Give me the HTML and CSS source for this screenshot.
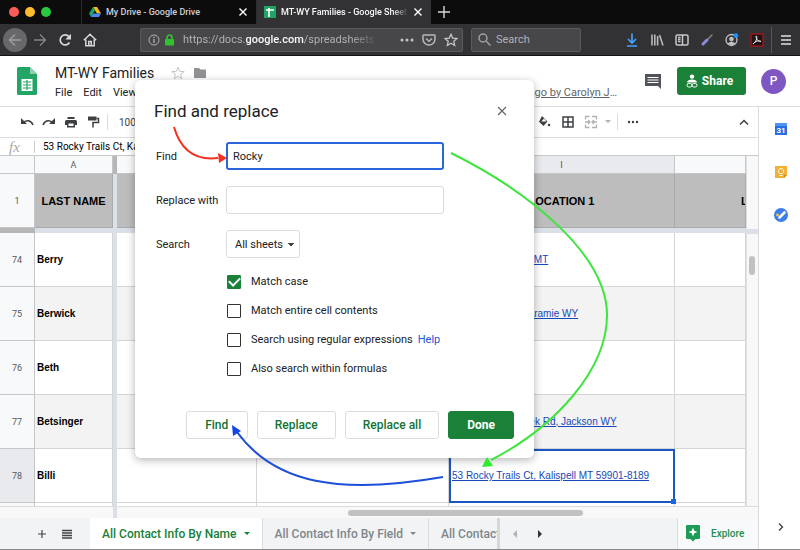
FILE: index.html
```html
<!DOCTYPE html>
<html lang="en">
<head>
    <meta charset="UTF-8">
    <meta name="viewport" content="width=device-width, initial-scale=1.0">
    <title>MT-WY Families - Google Sheets</title>
    <link rel="stylesheet" href="styles.css">
</head>
<body>
    <div class="tabs">
        <div class="lights"><span class="red"></span><span class="yellow"></span><span class="green"></span></div>
        <div class="tab">
            <svg width="12" height="12" viewBox="0 0 24 24"><path fill="#f9bc15" d="M8 2h8l8 13h-8z"/><path fill="#1ea362" d="M8 2l4 7-8 13-4-7z"/><path fill="#4688f4" d="M8 15h16l-4 7H4z"/></svg>
            <span class="tab-name">My Drive - Google Drive</span>
            <button class="plain" aria-label="Close tab"><svg width="10" height="10" viewBox="0 0 10 10"><path d="M1.500 1.500l7 7M8.500 1.500l-7 7" stroke="#fff" stroke-width="1.400"/></svg></button>
        </div>
        <div class="tab current">
            <svg width="12" height="12" viewBox="0 0 12 12"><rect width="12" height="12" fill="#1fa463"/><path d="M2 4h8M5 2v9" stroke="#fff" stroke-width="1.600"/></svg>
            <span class="tab-name fade">MT-WY Families - Google Sheets</span>
            <button class="plain" aria-label="Close tab"><svg width="10" height="10" viewBox="0 0 10 10"><path d="M1.500 1.500l7 7M8.500 1.500l-7 7" stroke="#fff" stroke-width="1.400"/></svg></button>
        </div>
        <button class="plain new-tab" aria-label="New tab"><svg width="12" height="12" viewBox="0 0 12 12"><path d="M6 0v12M0 6h12" stroke="#d8d8d8" stroke-width="1.400"/></svg></button>
    </div>

    <div class="navbar">
        <button class="plain back" aria-label="Back"><svg width="14" height="14" viewBox="0 0 14 14" fill="none" stroke="#a0a0a2" stroke-width="1.300"><path d="M13 7H1.500M7 1.500L1.500 7 7 12.500"/></svg></button>
        <button class="plain" aria-label="Forward"><svg width="14" height="14" viewBox="0 0 14 14" fill="none" stroke="#858587" stroke-width="1.300"><path d="M1 7h11.500M7 1.500L12.500 7 7 12.500"/></svg></button>
        <button class="plain" aria-label="Reload"><svg width="14" height="14" viewBox="0 0 14 14" fill="none" stroke="#d7d7db" stroke-width="1.700"><path d="M11.500 9.500A5 5 0 1 1 11 3.700"/><path fill="#d7d7db" stroke="none" d="M13 .8v5.700H7.300z"/></svg></button>
        <button class="plain" aria-label="Home"><svg width="14" height="14" viewBox="0 0 14 14" fill="none" stroke="#d7d7db" stroke-width="1.500"><path d="M.8 7.300L7 1.300l6.200 6M2.800 6.500v6.300h8.400V6.500M5.800 12.500V8.500h2.400v4"/></svg></button>
        <div class="urlbar">
            <svg width="12" height="12" viewBox="0 0 12 12" fill="none" stroke="#b1b1b3"><circle cx="6" cy="6" r="5"/><path d="M6 5v4M6 2.800v1.200" stroke-width="1.300"/></svg>
            <svg width="11" height="12" viewBox="0 0 11 12"><path d="M3 6V3.500a2.500 2.500 0 0 1 5 0V6" fill="none" stroke="#30c030" stroke-width="1.700"/><rect x="1" y="5" width="9" height="6.500" rx="1" fill="#30c030"/></svg>
            <span class="url">https://docs.<b>google.com</b>/spreadsheets</span>
            <svg width="14" height="14" viewBox="0 0 14 14" fill="#c4c4c6"><circle cx="2" cy="7" r="1.500"/><circle cx="7" cy="7" r="1.500"/><circle cx="12" cy="7" r="1.500"/></svg>
            <svg width="14" height="14" viewBox="0 0 14 14" fill="none" stroke="#b8b8ba" stroke-width="1.500"><path d="M1.800 2h10.400q.8 0 .8.800V6a6 6 0 0 1-12 0V2.800q0-.8.8-.8z"/><path d="M4 5.500l3 2.800 3-2.800"/></svg>
            <svg width="14" height="14" viewBox="0 0 14 14" fill="none" stroke="#c4c4c6" stroke-width="1.300"><path d="M7 1.200l1.700 3.900 4.300.4-3.200 2.800.9 4.200L7 10.300l-3.700 2.200.9-4.200L1 5.500l4.300-.4z"/></svg>
        </div>
        <label class="searchbox">
            <svg width="13" height="13" viewBox="0 0 13 13" fill="none" stroke="#a0a0a2" stroke-width="1.500"><circle cx="5" cy="5" r="4"/><path d="M8 8l4.500 4.500"/></svg>
            <input type="text" placeholder="Search" aria-label="Search">
        </label>
        <div class="tools">
            <svg width="16" height="16" viewBox="0 0 16 16" fill="none" stroke="#45a1ff" stroke-width="1.700"><path d="M8 1.500v9M4 7l4 4 4-4M3 14h10"/></svg>
            <svg width="16" height="16" viewBox="0 0 16 16" fill="none" stroke="#b8b8ba" stroke-width="1.600"><path d="M3 2.500v11M5.800 2.500v11M8.600 4v9.500M10.500 3l3.500 10.500"/></svg>
            <svg width="16" height="16" viewBox="0 0 16 16" fill="none" stroke="#c8c8ca" stroke-width="1.500"><rect x="2" y="3" width="12" height="10" rx="1.500"/><path d="M8.500 3v10M4 5.500h2.500M4 7.500h2.500M4 9.500h2.500"/></svg>
            <svg width="16" height="16" viewBox="0 0 16 16" stroke-linecap="round"><path d="M4 12l4-4" stroke="#8d8dd8" stroke-width="3"/><path d="M9 7l4-4" stroke="#888" stroke-width="1.200"/></svg>
            <svg width="16" height="16" viewBox="0 0 16 16"><circle cx="7.500" cy="8" r="5.500" fill="none" stroke="#c0c0c2" stroke-width="1.300"/><circle cx="7.500" cy="7" r="2.300" fill="#c0c0c2"/><path d="M3.800 11.500c2-2.500 5.400-2.500 7.400 0l-2 1.500H6z" fill="#c0c0c2"/><circle cx="12" cy="3.500" r="2.300" fill="#1e90ff"/></svg>
            <svg width="16" height="16" viewBox="0 0 16 16"><rect x="2" y="2" width="12" height="12" fill="#211516" stroke="#b3151b" stroke-width="1.200"/><path d="M4 12c3-2 4.500-6 3.500-8-1.500 0 .5 6 4.500 5.500-1.500-1.500-6-.5-8 2.500" fill="none" stroke="#e8e8e8"/></svg>
        </div>
        <button class="plain menu" aria-label="Menu"><svg width="12" height="12" viewBox="0 0 12 12"><path d="M1 2h10M1 6h10M1 10h10" stroke="#e0e0e2" stroke-width="1.500"/></svg></button>
    </div>

    <header class="header">
        <svg width="20" height="28" viewBox="0 0 20 28"><path d="M1.500 0H13l7 7v19.500a1.500 1.500 0 0 1-1.500 1.500h-17A1.500 1.500 0 0 1 0 26.500v-25A1.500 1.500 0 0 1 1.500 0z" fill="#23a566"/><path d="M13 0l7 7h-7z" fill="#8ed1b1"/><path d="M4.500 12h11v12h-11z" fill="#fff"/><path d="M6 15h8M6 18h8M6 21h8M10 13v10" stroke="#23a566" stroke-width="1.200"/></svg>
        <div class="doc">
            <div class="doc-title">
                <h1>MT-WY Families</h1>
                <svg width="14" height="14" viewBox="0 0 14 14" fill="none" stroke="#c4c4c4"><path d="M7 1.200l1.600 4.100 4.600.3-3.500 2.800 1.100 4.400L7 10.300l-3.800 2.500 1.100-4.400L.8 5.600l4.600-.3z"/></svg>
                <svg width="14" height="12" viewBox="0 0 14 12" fill="#8f9194"><path d="M1 1h5l1.500 1.500H12a1 1 0 0 1 1 1V11H1z"/></svg>
            </div>
            <nav class="menus"><a href="#">File</a><a href="#">Edit</a><a href="#">View</a></nav>
        </div>
        <a class="last-edit" href="#">Last edit was 2 days ago by Carolyn J</a>
        <svg width="16" height="16" viewBox="0 0 16 16"><path d="M0 1h16v15l-3-3H0z" fill="#50545a"/><path d="M2.500 4.500h11M2.500 7h11M2.500 9.500h11" stroke="#fff" stroke-width="1.200"/></svg>
        <button class="share">
            <svg width="12" height="14" viewBox="0 0 12 14"><circle cx="6" cy="2.600" r="2.200" fill="#fff"/><path d="M1 8.500c0-4 10-4 10 0z" fill="#fff"/><rect x="1" y="9.500" width="5" height="3.500" rx="1.700" fill="none" stroke="#fff"/><rect x="6" y="9.500" width="5" height="3.500" rx="1.700" fill="none" stroke="#fff"/></svg>
            Share
        </button>
        <button class="avatar">P</button>
    </header>

    <div class="work">
        <main class="main">
            <div class="toolbar">
                <div class="tool-group">
                    <svg width="16" height="16" viewBox="0 0 16 16"><path d="M2 4v6h6z" fill="#3c4043"/><path d="M4 9c3-3.500 8-3 10 2" fill="none" stroke="#3c4043" stroke-width="1.500"/></svg>
                    <svg width="16" height="16" viewBox="0 0 16 16"><path d="M14 4v6H8z" fill="#3c4043"/><path d="M12 9c-3-3.500-8-3-10 2" fill="none" stroke="#3c4043" stroke-width="1.500"/></svg>
                    <svg width="16" height="16" viewBox="0 0 16 16"><path d="M4.500 3h7v2h-7zM3.500 6h9A1.500 1.500 0 0 1 14 7.500V11h-2v2.500H4V11H2V7.500A1.500 1.500 0 0 1 3.500 6z" fill="#3c4043"/><path d="M5.500 9.500h5V12h-5z" fill="#fff"/></svg>
                    <svg width="16" height="16" viewBox="0 0 16 16"><path d="M3 2.500h8.500v4H3z" fill="#3c4043"/><path d="M11.500 4.500h2v4H8v5" fill="none" stroke="#3c4043" stroke-width="1.500"/></svg>
                </div>
                <div class="divider"></div>
                <span class="zoom">100%</span>
                <div class="tool-group right">
                    <svg width="16" height="16" viewBox="0 0 16 16"><path d="M5 2l5.500 5.500L6.500 12 2 7.800z" fill="#3c4043"/><path d="M4.300 7.500l2.700-3 2.500 3z" fill="#fff"/><circle cx="12" cy="11" r="1.300" fill="#3c4043"/></svg>
                    <svg width="16" height="16" viewBox="0 0 16 16" fill="none" stroke="#3c4043" stroke-width="1.500"><path d="M3 3h10v10H3zM8 3v10M3 8h10"/></svg>
                    <svg width="16" height="16" viewBox="0 0 16 16" fill="none" stroke="#b0b2b4" stroke-width="1.300"><path d="M2.500 5.500v-3h4M9 2.500h4.500v3M13.500 10.500v3H9M6.500 13.500h-4v-3M2 8h5M5 6l2 2-2 2M14 8H9M11 6L9 8l2 2"/></svg>
                    <svg class="caret" width="6" height="4" viewBox="0 0 6 4"><path d="M0 0h6L3 3z" fill="#b0b2b4"/></svg>
                    <div class="divider"></div>
                    <svg width="16" height="16" viewBox="0 0 16 16" fill="#3c4043"><circle cx="4" cy="8" r="1.200"/><circle cx="8" cy="8" r="1.200"/><circle cx="12" cy="8" r="1.200"/></svg>
                </div>
                <button class="plain collapse" aria-label="Hide menus"><svg width="10" height="8" viewBox="0 0 10 8"><path d="M1 6.500l4-4 4 4" fill="none" stroke="#3c4043" stroke-width="1.500"/></svg></button>
            </div>

            <div class="formula">
                <span class="fx">fx</span>
                <span class="formula-text">53 Rocky Trails Ct, Kalispell MT 59901-8189</span>
            </div>

            <div class="sheet">
                <div class="grid">
                    <table>
                        <colgroup><col class="c-num"><col class="c-a"><col class="c-freeze"><col class="c-b"><col class="c-h"><col class="c-i"><col></colgroup>
                        <thead>
                            <tr class="letters"><th></th><th>A</th><th class="bar"></th><th></th><th></th><th class="picked">I</th><th></th></tr>
                        </thead>
                        <tbody>
                            <tr class="titles"><th class="num">1</th><th>LAST NAME</th><th class="freeze"></th><th></th><th></th><th>LOCATION 1</th><th class="cut">LOCATION 2</th></tr>
                            <tr class="freeze-row"><th class="bar"></th><td colspan="6"></td></tr>
                            <tr><th class="num">74</th><td>Berry</td><td class="freeze"></td><td></td><td></td><td><a href="#">12 Elk St, Helena, MT</a></td><td></td></tr>
                            <tr class="odd"><th class="num">75</th><td>Berwick</td><td class="freeze"></td><td></td><td></td><td><a href="#">310 Grand Ave, Laramie WY</a></td><td></td></tr>
                            <tr><th class="num">76</th><td>Beth</td><td class="freeze"></td><td></td><td></td><td></td><td></td></tr>
                            <tr class="odd"><th class="num">77</th><td>Betsinger</td><td class="freeze"></td><td></td><td></td><td><a href="#">14500 N Fish Creek Rd, Jackson WY</a></td><td></td></tr>
                            <tr><th class="num picked">78</th><td>Billi</td><td class="freeze"></td><td></td><td></td><td class="selected"><a href="#">53 Rocky Trails Ct, Kalispell MT 59901-8189</a></td><td></td></tr>
                            <tr class="last"><th class="num"></th><td></td><td class="freeze"></td><td></td><td></td><td></td><td></td></tr>
                        </tbody>
                    </table>
                </div>
                <div class="vscroll"><div class="vhead"></div><div class="vthumb"></div></div>
            </div>
            <div class="hscroll"><div class="hfreeze"></div><div class="hthumb"></div></div>

            <footer class="sheets">
                <button class="plain" aria-label="Add sheet"><svg width="8" height="8" viewBox="0 0 8 8"><path d="M4 0v8M0 4h8" stroke="#444" stroke-width="1.200"/></svg></button>
                <button class="plain" aria-label="All sheets"><svg width="10" height="10" viewBox="0 0 10 10"><path d="M0 1.500h10M0 4h10M0 6.500h10M0 9h10" stroke="#444" stroke-width="1.300"/></svg></button>
                <button class="sheet-tab active">All Contact Info By Name <svg width="6" height="4" viewBox="0 0 6 4"><path d="M0 0h6L3 3z" fill="#188038"/></svg></button>
                <button class="sheet-tab">All Contact Info By Field <svg width="6" height="4" viewBox="0 0 6 4"><path d="M0 0h6L3 3z" fill="#80868b"/></svg></button>
                <button class="sheet-tab clipped">All Contact Info</button>
                <div class="pager">
                    <button class="plain" aria-label="Scroll left"><svg width="5" height="8" viewBox="0 0 5 8"><path d="M4 0v8L0 4z" fill="#b0b2b4"/></svg></button>
                    <button class="plain" aria-label="Scroll right"><svg width="5" height="8" viewBox="0 0 5 8"><path d="M1 0v8l4-4z" fill="#333"/></svg></button>
                </div>
                <button class="explore">
                    <svg width="14" height="17" viewBox="0 0 14 17"><path d="M1 0h12a1 1 0 0 1 1 1v12a1 1 0 0 1-1 1H9.500L7 16.500 4.500 14H1a1 1 0 0 1-1-1V1a1 1 0 0 1 1-1z" fill="#1e9b57"/><path d="M7 2.500l1.300 3.200L11.500 7 8.300 8.300 7 11.500 5.700 8.300 2.500 7l3.200-1.300z" fill="#fff"/></svg>
                    Explore
                </button>
            </footer>
        </main>

        <aside class="side">
            <svg width="14" height="14" viewBox="0 0 14 14"><path d="M1 1h12v12H1z" fill="#2a6fe0"/><path d="M1 1h12v3H1z" fill="#4f94f5"/><text x="7" y="11" text-anchor="middle" class="day">31</text></svg>
            <svg width="14" height="14" viewBox="0 0 14 14"><path d="M1 1h12v9l-3 3H1z" fill="#f2b134"/><path d="M13 10l-3 3v-3z" fill="#d78b12"/><path d="M5.500 8.500C3 6 5 3.500 7 3.500s4 2.500 1.500 5zM5.500 10.500h3" fill="none" stroke="#fff"/></svg>
            <svg width="14" height="14" viewBox="0 0 14 14"><circle cx="7" cy="7" r="7" fill="#3b7de9"/><path d="M5.500 9.500l5-5" stroke="#fff" stroke-width="2.600" stroke-linecap="round"/><circle cx="3.500" cy="7" r="1.400" fill="#f2c94c"/></svg>
            <button class="plain expand" aria-label="Show side panel"><svg width="6" height="10" viewBox="0 0 6 10"><path d="M1 1.500L4.500 5 1 8.500" fill="none" stroke="#444" stroke-width="1.400"/></svg></button>
        </aside>
    </div>

    <form class="dialog" role="dialog" aria-labelledby="dialog-title">
        <div class="dialog-head">
            <h2 id="dialog-title">Find and replace</h2>
            <button type="button" class="plain" aria-label="Close"><svg width="10" height="10" viewBox="0 0 10 10"><path d="M1 1l8 8M9 1L1 9" stroke="#666" stroke-width="1.200"/></svg></button>
        </div>
        <div class="fields">
            <label for="find">Find</label>
            <input class="focused" id="find" type="text" value="Rocky">
            <label for="replace">Replace with</label>
            <input id="replace" type="text">
            <label for="scope">Search</label>
            <select id="scope"><option>All sheets</option></select>
        </div>
        <div class="checks">
            <label><input type="checkbox" checked>Match case</label>
            <label><input type="checkbox">Match entire cell contents</label>
            <div class="with-help"><label><input type="checkbox">Search using regular expressions</label><a href="#">Help</a></div>
            <label><input type="checkbox">Also search within formulas</label>
        </div>
        <div class="actions">
            <button type="button">Find</button>
            <button type="button">Replace</button>
            <button type="button">Replace all</button>
            <button type="button" class="done">Done</button>
        </div>
    </form>

    <svg class="arrows" width="800" height="550" viewBox="0 0 800 550" fill="none">
        <path d="M174 127C180 148 193 161 218 158" stroke="#f5301c" stroke-width="2"/>
        <path d="M218 153l9 5-8 5z" fill="#f5301c"/>
        <path d="M451 153C530 192 607 255 607 315C607 370 555 427 491 460" stroke="#3fe53f" stroke-width="2"/>
        <path d="M487 457l-5 10 11-1z" fill="#2bef2b"/>
        <path d="M443 477C340 495 275 484 237 432" stroke="#1d4fd8" stroke-width="2"/>
        <path d="M232 425l1 11 8-5z" fill="#1148e8"/>
    </svg>
</body>
</html>
```
FILE: styles.css
```css
* {
    box-sizing: border-box;
}
body {
    margin: 0;
    height: 100vh;
    overflow: hidden;
    display: flex;
    flex-direction: column;
    background-color: #fff;
    border-bottom: 1px solid #8a8a8c;
    font-family: Roboto, "Liberation Sans", sans-serif;
    font-size: 11px;
    color: #202124;
}
svg {
    flex: none;
    display: block;
}
button, input, select {
    font: inherit;
}
a {
    color: inherit;
    text-decoration: none;
}
.plain {
    display: flex;
    align-items: center;
    justify-content: center;
    padding: 0;
    border: 0;
    background: none;
}

/* browser window */
.tabs {
    flex: none;
    display: flex;
    height: 24px;
    background-color: #0c0c0d;
}
.lights {
    display: flex;
    align-items: center;
    gap: 6px;
    width: 81px;
    padding-left: 9px;
}
.lights span {
    width: 10px;
    height: 10px;
    border-radius: 50%;
}
.red { background-color: #fc5b57; }
.yellow { background-color: #fdbc2e; }
.green { background-color: #28c840; }
.tab {
    display: flex;
    align-items: center;
    gap: 5px;
    width: 175px;
    padding: 0 8px 0 7px;
    border-left: 1px solid #2c2c2e;
    color: #d0d0d2;
    font-size: 9px;
    font-weight: 500;
}
.current {
    background-color: #323234;
    color: #f9f9fa;
}
.tab-name {
    flex: 1;
    overflow: hidden;
    white-space: nowrap;
}
.fade {
    -webkit-mask-image: linear-gradient(to right, #000 88%, transparent);
    mask-image: linear-gradient(to right, #000 88%, transparent);
}
.new-tab {
    width: 26px;
}
.navbar {
    flex: none;
    display: flex;
    align-items: center;
    height: 32px;
    gap: 11px;
    padding-left: 3px;
    background-color: #323234;
    border-bottom: 1px solid #141416;
}
.back {
    width: 24px;
    height: 24px;
    margin-right: -5px;
    border-radius: 50%;
    background-color: #68686a;
}
.urlbar, .searchbox {
    display: flex;
    align-items: center;
    height: 24px;
    background-color: #474749;
    border: 1px solid #5a5a5c;
    border-radius: 2px;
    color: #b1b1b3;
}
.urlbar {
    flex: 1;
    gap: 8px;
    margin-left: 32px;
    padding: 0 4px 0 7px;
}
.urlbar svg:first-child {
    margin-right: -4px;
}
.url {
    flex: 1;
    max-width: 196px;
    margin-right: auto;
    overflow: hidden;
    white-space: nowrap;
    -webkit-mask-image: linear-gradient(to right, #000 85%, transparent);
    mask-image: linear-gradient(to right, #000 85%, transparent);
}
.url b {
    color: #f9f9fa;
    font-weight: 500;
}
.searchbox {
    width: 110px;
    margin-left: -3px;
    padding-left: 6px;
    gap: 5px;
}
.searchbox input {
    width: 70px;
    padding: 0;
    border: 0;
    background: none;
}
.searchbox input::placeholder {
    color: #b1b1b3;
}
.tools {
    display: flex;
    gap: 9px;
    margin-left: 32px;
}
.menu {
    width: 29px;
    height: 26px;
    margin-left: -5px;
    border-left: 1px solid #555557;
}

/* document header */
.header {
    flex: none;
    display: flex;
    align-items: center;
    height: 51px;
    padding: 0 14px 0 17px;
    border-bottom: 1px solid #dadce0;
}
.doc {
    margin-left: 18px;
    padding-top: 3px;
}
.doc-title {
    display: flex;
    align-items: center;
    gap: 8px;
}
.doc-title h1 {
    margin-right: 9px;
}
h1 {
    margin: 0;
    font-size: 14px;
    line-height: 20px;
    font-weight: 400;
}
.menus {
    display: flex;
    gap: 11px;
    line-height: 20px;
}
.last-edit {
    width: 220px;
    margin: 22px 28px 0 auto;
    color: #5f6368;
    text-align: right;
    text-decoration: underline;
    white-space: nowrap;
}
.last-edit::after {
    content: "…";
    display: inline-block;
}
.share {
    display: flex;
    align-items: center;
    justify-content: center;
    gap: 4px;
    width: 69px;
    height: 28px;
    margin: 0 15px 0 16px;
    padding: 0 4px 0 0;
    border: 0;
    border-radius: 3px;
    background-color: #1b8038;
    color: #fff;
    font-size: 12px;
    font-weight: 700;
}
.avatar {
    width: 25px;
    height: 25px;
    padding: 0;
    border: 0;
    border-radius: 50%;
    background-color: #7e57c2;
    color: #fff;
    font-size: 12px;
    font-weight: 500;
}
.work {
    flex: 1;
    display: flex;
    min-height: 0;
}
.main {
    flex: 1;
    min-width: 0;
    display: flex;
    flex-direction: column;
}
.toolbar {
    flex: none;
    display: flex;
    align-items: center;
    height: 31px;
    padding: 0 9px 0 19px;
    border-bottom: 1px solid #dadce0;
}
.tool-group {
    display: flex;
    align-items: center;
    gap: 6px;
}
.right {
    gap: 7px;
    margin-left: auto;
}
.caret {
    margin: 0 -1px;
}
.divider {
    width: 1px;
    height: 16px;
    background-color: #dadce0;
}
.tool-group + .divider {
    margin: 0 11px 0 6px;
}
.zoom {
    font-size: 10px;
    color: #444;
}
.collapse {
    margin-left: 98px;
}
.formula {
    flex: none;
    display: flex;
    align-items: center;
    height: 17px;
}
.fx {
    width: 35px;
    padding-left: 9px;
    border-right: 1px solid #ccc;
    color: #a8a8a8;
    font: italic 15px/12px "Liberation Serif", serif;
}
.formula-text {
    padding-left: 8px;
    color: #000;
    font-size: 10px;
}

/* spreadsheet */
.sheet {
    flex: 1;
    display: flex;
    min-height: 0;
    border-top: 1px solid #c8caca;
}
.grid {
    flex: 1;
    min-width: 0;
    overflow: hidden;
}
table {
    width: 100%;
    table-layout: fixed;
    border-collapse: separate;
    border-spacing: 0;
    font: bold 11px/14px "Liberation Sans", sans-serif;
    color: #000;
}
.c-num { width: 35px; }
.c-a { width: 78px; }
.c-freeze { width: 4px; }
.c-b { width: 140px; }
.c-h { width: 192px; }
.c-i { width: 226px; }
th, td {
    height: 54px;
    padding: 0 2px;
    border-right: 1px solid #d5d5d5;
    border-bottom: 1px solid #d5d5d5;
    overflow: hidden;
    white-space: nowrap;
}
td {
    font-size: 10px;
}
td a {
    color: #1548b8;
    font-weight: 400;
    text-decoration: underline;
}
.letters th, .num {
    background-color: #f8f9fa;
    border-color: #c4c6c8;
    color: #55585c;
    font: 9px/12px Roboto, sans-serif;
}
.letters th {
    height: 18px;
}
.letters .picked, th.num.picked {
    background-color: #e8eaed;
}
.titles th:not(.num) {
    background-color: #bdbdbd;
    border-color: #aaa;
}
.titles .cut {
    padding-left: 66px;
    text-align: left;
}
.odd td {
    background-color: #f3f3f3;
}
td.freeze, .titles th.freeze, .freeze-row td {
    padding: 0;
    border: 0;
    background-color: #dadfe8;
}
.letters th.bar, th.bar {
    padding: 0;
    border: 0;
    background-color: #b7b7b7;
}
.freeze-row th, .freeze-row td {
    height: 5px;
}
.last th, .last td {
    height: 20px;
}
td.selected {
    padding: 0 0 0 1px;
    border: 2px solid #1a56c4;
    position: relative;
    overflow: visible;
}
.selected::after {
    content: "";
    position: absolute;
    right: -3px;
    bottom: -3px;
    width: 5px;
    height: 5px;
    background-color: #1a66e0;
}
.vscroll {
    width: 12px;
    background-color: #f8f8f8;
    border-left: 1px solid #e0e0e0;
}
.vhead {
    height: 78px;
    margin-bottom: 22px;
    border-bottom: 5px solid #dadfe8;
}
.vthumb {
    width: 6px;
    height: 19px;
    margin-left: 2px;
    border-radius: 3px;
    background-color: #c1c1c1;
}
.hscroll {
    flex: none;
    display: flex;
    align-items: center;
    height: 12px;
    background-color: #f8f8f8;
    border-top: 1px solid #dcdcdc;
}
.hfreeze {
    width: 4px;
    height: 12px;
    margin-left: 113px;
    background-color: #dadfe8;
}
.hthumb {
    width: 31%;
    height: 6px;
    margin-left: 231px;
    border-radius: 3px;
    background-color: #c1c1c1;
}
.sheets {
    flex: none;
    display: flex;
    align-items: center;
    gap: 16px;
    height: 31px;
    padding-left: 38px;
    background-color: #f1f3f4;
}
.sheet-tab {
    display: flex;
    align-items: center;
    gap: 7px;
    height: 31px;
    margin-left: -16px;
    padding: 0 12px;
    border: 0;
    border-right: 1px solid #dadce0;
    background: none;
    color: #80868b;
    font-size: 12px;
    font-weight: 500;
    white-space: nowrap;
}
.active {
    margin-left: 2px;
    background-color: #fff;
    color: #188038;
}
.clipped {
    flex: none;
    width: 71px;
    overflow: hidden;
    border-right: 3px solid #d5d7d9;
}
.pager {
    display: flex;
    gap: 18px;
    margin-left: -4px;
}
.pager .plain {
    width: 6px;
}
.explore {
    display: flex;
    align-items: center;
    gap: 11px;
    width: 81px;
    height: 31px;
    margin-left: auto;
    padding: 0 8px;
    border: 0;
    border-left: 1px solid #dadce0;
    background-color: #f8f9fa;
    color: #1e9150;
    font-size: 10px;
    font-weight: 500;
}
.side {
    flex: none;
    display: flex;
    flex-direction: column;
    align-items: center;
    gap: 29px;
    width: 42px;
    padding: 15px 0 17px 2px;
    border-left: 1px solid #dadce0;
}
.day {
    fill: #fff;
    font-size: 8px;
    font-weight: 700;
}
.expand {
    margin-top: auto;
}

/* find and replace */
.dialog {
    position: absolute;
    left: 135px;
    top: 80px;
    width: 399px;
    padding: 20px 20px 19px 19px;
    border-radius: 6px;
    background-color: #fff;
    box-shadow: 0 2px 9px rgba(0, 0, 0, 0.3);
}
.dialog-head {
    display: flex;
    align-items: center;
    justify-content: space-between;
    height: 22px;
    padding-right: 7px;
}
h2 {
    margin: 0;
    font-size: 17px;
    line-height: 22px;
    font-weight: 400;
}
.fields {
    display: grid;
    grid-template-columns: 70px 218px;
    grid-auto-rows: 28px;
    row-gap: 16px;
    align-items: center;
    margin: 20px 0 17px 2px;
    white-space: nowrap;
}
.fields input, .fields select {
    height: 28px;
    padding: 0 6px;
    border: 1px solid #dadce0;
    border-radius: 3px;
    background-color: #fff;
    color: #202124;
    outline: none;
}
.fields .focused {
    border: 2px solid #2a66d9;
    padding: 0 5px;
}
.fields select {
    appearance: none;
    width: 74px;
    padding: 0 8px;
    background: conic-gradient(from -45deg at 50% 100%, #444 90deg, transparent 0) 61px 12px / 6px 3px no-repeat;
}
.checks {
    display: flex;
    flex-direction: column;
    align-items: flex-start;
    gap: 15px;
    margin-left: 73px;
    line-height: 14px;
}
.checks label {
    display: flex;
    align-items: center;
    gap: 10px;
}
.checks input {
    appearance: none;
    width: 14px;
    height: 14px;
    margin: 0;
    border: 1px solid #333;
    border-radius: 1px;
    display: grid;
    place-items: center;
}
.checks input:checked {
    border-color: #1b8038;
    background-color: #1b8038;
}
.checks input:checked::after {
    content: "";
    width: 9px;
    height: 5px;
    margin-bottom: 3px;
    border-left: 2px solid #fff;
    border-bottom: 2px solid #fff;
    transform: rotate(-45deg);
}
.with-help {
    display: flex;
    gap: 5px;
}
.with-help a {
    color: #1a56d6;
}
.actions {
    display: flex;
    justify-content: flex-end;
    gap: 9px;
    margin-top: 35px;
}
.actions button {
    min-width: 62px;
    height: 28px;
    padding: 0 17px;
    border: 1px solid #dadce0;
    border-radius: 3px;
    background-color: #fff;
    color: #137333;
    font-size: 12px;
    font-weight: 500;
}
.actions .done {
    padding: 0 18px;
    border-color: #1b8038;
    background-color: #1b8038;
    color: #fff;
    font-weight: 700;
}
.arrows {
    position: absolute;
    left: 0;
    top: 0;
    pointer-events: none;
}
```
